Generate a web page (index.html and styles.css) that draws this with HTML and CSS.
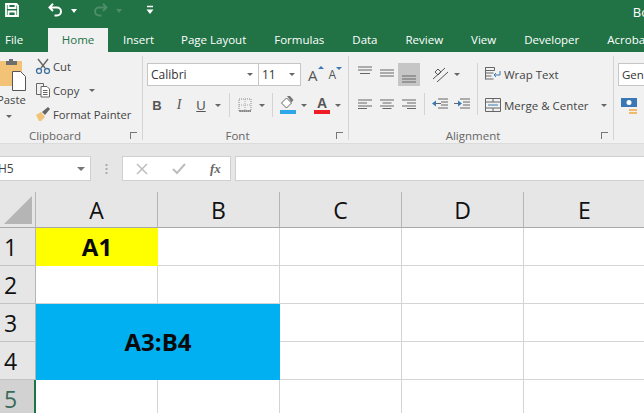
FILE: index.html
```html
<!DOCTYPE html>
<html lang="en">
<head>
  <meta charset="UTF-8">
  <title>Book1 - Excel</title>
  <link rel="stylesheet" href="styles.css">
</head>
<body>
  <!-- Title bar -->
  <div class="titlebar">
    <svg class="qat-save" width="14" height="14" viewBox="0 0 14 14"><path d="M1 1h10.500L13 2.500V13H1z M3.500 1.500V5h7V1.500 M3.500 13V8.500h7V13" fill="none" stroke="#fff" stroke-width="1.800"/></svg>
    <svg class="qat-undo" width="15" height="14" viewBox="0 0 15 14"><path d="M5 .8L1.500 4.500 5 8M2 4.500h7a4 4 0 0 1 0 8H6.500" fill="none" stroke="#fff" stroke-width="2"/></svg>
    <span class="caret-white"></span>
    <svg class="qat-redo" width="15" height="14" viewBox="0 0 15 14"><path d="M10 .8l3.500 3.700L10 8M13 4.500H6a4 4 0 0 0 0 8h2.500" fill="none" stroke="#4d8c68" stroke-width="2"/></svg>
    <span class="caret-dim"></span>
    <svg class="qat-more" width="8" height="10" viewBox="0 0 8 10"><path d="M1 1.500h6" stroke="#fff" stroke-width="1.500"/><path d="M0.500 4.500h7L4 9z" fill="#fff"/></svg>
    <span class="doc-title">Bo</span>
  </div>

  <!-- Tabs -->
  <div class="tabs">
    <span class="tab-file">File</span>
    <span class="tab-home">Home</span>
    <span class="tab-insert">Insert</span>
    <span class="tab">Page Layout</span>
    <span class="tab">Formulas</span>
    <span class="tab">Data</span>
    <span class="tab">Review</span>
    <span class="tab">View</span>
    <span class="tab">Developer</span>
    <span class="tab">Acrobat</span>
  </div>

  <!-- Ribbon -->
  <div class="ribbon">
    <div class="group group-clipboard">
      <div class="clip-body">
        <div class="paste">
          <svg class="paste-icon" width="26" height="34" viewBox="0 0 26 34"><path d="M0 3h22v25H0z" fill="#f2c377"/><path d="M6 3h3V1h4v2h4v4H6z" fill="#6e6e6e"/><path d="M12.500 13.500h8l5 5v14h-13z" fill="#fff" stroke="#555"/></svg>
          <span class="paste-label">Paste</span>
          <span class="caret"></span>
        </div>
        <div class="clip-actions">
          <div class="clip-row">
            <svg width="16" height="16" viewBox="0 0 16 16"><path d="M3 1l7 9M13 1L6 10" stroke="#666" stroke-width="1.400"/><circle cx="4" cy="13" r="2.500" fill="none" stroke="#3f6f9f" stroke-width="1.300"/><circle cx="12" cy="13" r="2.500" fill="none" stroke="#3f6f9f" stroke-width="1.300"/></svg>
            <span>Cut</span>
          </div>
          <div class="clip-row">
            <svg width="16" height="16" viewBox="0 0 16 16"><path d="M1.500 1.500h7v11h-7z" fill="#f1f1f1" stroke="#666"/><path d="M6 4.500h6l2.500 2.500v8H6z" fill="#fff" stroke="#666"/><path d="M8 8.500h4.500M8 10.500h4.500M8 12.500h4.500" stroke="#666"/></svg>
            <span>Copy</span>
            <span class="caret caret-copy"></span>
          </div>
          <div class="clip-row">
            <svg width="16" height="16" viewBox="0 0 16 16"><path d="M1 9l5-3 4 5-4 4H4z" fill="#f2c377"/><path d="M7 6l6-5 2 2-5 6z" fill="#666"/></svg>
            <span>Format Painter</span>
          </div>
        </div>
      </div>
      <div class="group-label">Clipboard</div>
      <span class="launcher"></span>
    </div>

    <div class="group group-font">
      <div class="font-body">
        <div class="font-row">
          <div class="combo combo-font">Calibri<span class="caret"></span></div>
          <div class="combo combo-size">11<span class="caret"></span></div>
          <span class="grow-font">A<i class="tri-up"></i></span>
          <span class="shrink-font">A<i class="tri-down"></i></span>
        </div>
        <div class="font-row font-row-two">
          <span class="fmt fmt-b">B</span>
          <span class="fmt fmt-i">I</span>
          <span class="fmt fmt-u">U</span>
          <span class="caret caret-u"></span>
          <span class="vsep vsep-one"></span>
          <svg class="borders" width="14" height="14" viewBox="0 0 14 14"><path d="M1 1h12v12H1z" fill="none" stroke="#888" stroke-dasharray="1 1"/><path d="M7 1v12M1 7h12" stroke="#aaa" stroke-dasharray="1 1"/><path d="M1 13h12" stroke="#555"/></svg>
          <span class="caret caret-borders"></span>
          <span class="vsep vsep-two"></span>
          <div class="color-btn">
            <svg width="16" height="14" viewBox="0 0 16 14"><path d="M1.500 7l5-5 5 5-5 5z" fill="#fff" stroke="#666"/><path d="M7 0h3l3.500 4-2 2.500z" fill="#777"/></svg>
            <span class="swatch swatch-blue"></span>
          </div>
          <span class="caret caret-color"></span>
          <div class="color-btn color-btn-font">
            <span class="font-a">A</span>
            <span class="swatch swatch-red"></span>
          </div>
          <span class="caret caret-color"></span>
        </div>
      </div>
      <div class="group-label">Font</div>
      <span class="launcher"></span>
    </div>

    <div class="group group-align">
      <div class="align-body">
        <div class="align-grid">
          <svg class="al al-top" viewBox="0 0 14 10"><path d="M0 1h14M0 4h14M2 7.500h10" stroke="#666"/></svg>
          <svg class="al al-mid" viewBox="0 0 14 10"><path d="M0 2h14M0 5h14M0 8h14" stroke="#666"/></svg>
          <span class="al-on"><svg class="al" viewBox="0 0 14 10"><path d="M0 3h14M0 6h14M0 9h14" stroke="#666"/></svg></span>
          <svg class="al" viewBox="0 0 14 10"><path d="M0 1h14M0 4h9M0 7h14M0 9.500h9" stroke="#666"/></svg>
          <svg class="al" viewBox="0 0 14 10"><path d="M0 1h14M2.500 4h9M0 7h14M2.500 9.500h9" stroke="#666"/></svg>
          <svg class="al" viewBox="0 0 14 10"><path d="M0 1h14M5 4h9M0 7h14M5 9.500h9" stroke="#666"/></svg>
        </div>
        <div class="orient-col">
          <div class="orient">
            <svg width="18" height="16" viewBox="0 0 18 16"><path d="M1 12L13 1M5 15L16 5" stroke="#555"/><path d="M3 5l3-3 3 3-3 3z" fill="none" stroke="#555"/></svg>
            <span class="caret"></span>
          </div>
          <div class="indent">
            <svg width="16" height="13" viewBox="0 0 16 13"><path d="M6 1h10M9 4h7M9 7h7M6 10h10M3 5.500h6" stroke="#666"/><path d="M0 5.500l4-3v6z" fill="#3a78b5"/></svg>
            <svg width="16" height="13" viewBox="0 0 16 13"><path d="M6 1h10M9 4h7M9 7h7M6 10h10M0 5.500h5" stroke="#666"/><path d="M8 5.500l-4-3v6z" fill="#3a78b5"/></svg>
          </div>
        </div>
        <div class="merge-col">
          <div class="merge-row">
            <svg width="16" height="16" viewBox="0 0 16 16"><path d="M.5 1.500h9v3h-9zM.5 7h8M.5 10h6M.5 13h8M.5 1.500v12" fill="none" stroke="#666"/><path d="M15 5v4H9M11 7L9 9l2 2" fill="none" stroke="#3a78b5"/></svg>
            <span>Wrap Text</span>
          </div>
          <div class="merge-row">
            <svg width="16" height="16" viewBox="0 0 16 16"><path d="M.5 1.500h15v13H.5zM.5 5h15M.5 11h15M8 1.500V5M8 11v3.500" fill="none" stroke="#666"/><path d="M3 8h10" stroke="#3a78b5"/></svg>
            <span>Merge &amp; Center</span>
            <span class="caret caret-merge"></span>
          </div>
        </div>
      </div>
      <div class="group-label">Alignment</div>
      <span class="launcher"></span>
    </div>

    <div class="group group-number">
      <div class="combo combo-number">General</div>
      <svg class="money" width="17" height="19" viewBox="0 0 17 19"><path d="M0 1h16v9H0z" fill="#3a78b5"/><circle cx="8" cy="5.500" r="2.500" fill="#fff"/><path d="M8 12h8v2H8zM8 15h8v2H8z" fill="#f0b96b"/></svg>
    </div>
  </div>

  <div class="ribbon-gap"></div>

  <!-- Formula bar -->
  <div class="formula-bar">
    <div class="name-box">H5<span class="caret"></span></div>
    <div class="fx-dots"></div>
    <div class="fx-buttons">
      <svg width="12" height="12" viewBox="0 0 12 12"><path d="M1 1l10 10M11 1L1 11" stroke="#bdbdbd" stroke-width="1.500"/></svg>
      <svg width="14" height="12" viewBox="0 0 14 12"><path d="M1 6l4 4 8-9" fill="none" stroke="#bdbdbd" stroke-width="2"/></svg>
      <span class="fx">fx</span>
    </div>
    <div class="fx-input"></div>
  </div>

  <!-- Sheet -->
  <div class="sheet">
    <div class="corner"><i></i></div>
    <div class="col-head">A</div>
    <div class="col-head">B</div>
    <div class="col-head">C</div>
    <div class="col-head">D</div>
    <div class="col-head">E</div>

    <div class="row-head">1</div>
    <div class="cell cell-yellow">A1</div>
    <div class="cell"></div><div class="cell"></div><div class="cell"></div><div class="cell"></div>

    <div class="row-head">2</div>
    <div class="cell"></div><div class="cell"></div><div class="cell"></div><div class="cell"></div><div class="cell"></div>

    <div class="row-head">3</div>
    <div class="cell cell-blue">A3:B4</div>
    <div class="cell"></div><div class="cell"></div><div class="cell"></div>

    <div class="row-head">4</div>
    <div class="cell"></div><div class="cell"></div><div class="cell"></div>

    <div class="row-head row-active">5</div>
    <div class="cell"></div><div class="cell"></div><div class="cell"></div><div class="cell"></div><div class="cell"></div>
  </div>
</body>
</html>
```

FILE: styles.css
```css
* {
  box-sizing: border-box;
}

html, body {
  margin: 0;
  height: 100%;
  overflow: hidden;
}

body {
  width: 644px;
  height: 413px;
  font-family: "Open Sans", "Liberation Sans", sans-serif;
  font-size: 12px;
  color: #444;
  background: #e6e6e6;
}

/* Title bar */
.titlebar {
  height: 28px;
  background: #217346;
  display: flex;
  align-items: flex-start;
  padding: 3px 0 0 5px;
}

.qat-undo { margin-left: 29px; }
.qat-redo { margin-left: 16px; }
.qat-more { margin-left: 24px; margin-top: 2px; }

.caret-white, .caret-dim {
  width: 0;
  height: 0;
  margin: 6px 0 0 8px;
  border: 3px solid transparent;
  border-top: 4px solid #fff;
  border-bottom: 0;
}
.caret-dim { border-top-color: #4d8c68; }

.doc-title {
  margin-left: auto;
  margin-right: -5px;
  color: #fff;
  font-size: 13px;
}

/* Tabs */
.tabs {
  height: 24px;
  background: #217346;
  display: flex;
  color: #fff;
  font-size: 11.5px;
  line-height: 24px;
  white-space: nowrap;
  overflow: hidden;
}

.tabs span { flex: none; }
.tab-file { margin-left: 5px; width: 43px; }
.tab-home { width: 60px; background: #f1f1f1; color: #217346; text-align: center; }
.tab-insert { margin: 0 -1px 0 15px; }
.tab { margin-left: 28px; }

/* Ribbon */
.ribbon {
  height: 92px;
  background: #f1f1f1;
  display: flex;
  padding-top: 4px;
  border-bottom: 1px solid #dcdcdc;
}

.group {
  position: relative;
  flex: none;
  border-right: 1px solid #d4d4d4;
  height: 84px;
}

.group-clipboard { width: 143px; }
.group-font { width: 206px; }
.group-align { width: 265px; }
.group-number { flex: 1; border-right: 0; padding: 7px 0 0 4px; }

.group-label {
  position: absolute;
  left: 0;
  right: 16px;
  bottom: -3px;
  text-align: center;
  font-size: 11.500px;
  line-height: 14px;
  color: #666;
}

.group-clipboard .group-label { right: 32px; }

.launcher {
  position: absolute;
  right: 5px;
  bottom: 1px;
  width: 7px;
  height: 7px;
  border-left: 1px solid #777;
  border-top: 1px solid #777;
}

.caret {
  display: inline-block;
  flex: none;
  width: 0;
  height: 0;
  border: 3px solid transparent;
  border-top: 3px solid #666;
  border-bottom: 0;
}

/* Clipboard */
.clip-body { display: flex; }

.paste {
  width: 31px;
  margin-left: -3px;
  display: flex;
  flex: none;
  flex-direction: column;
  align-items: flex-start;
  padding-top: 2px;
}

.paste-icon { margin-left: 3px; flex: none; }

.paste-label {
  font-size: 11.250px;
  line-height: 16px;
}

.paste .caret { margin: 7px 0 0 9px; }

.clip-actions {
  margin-left: 7px;
  padding-top: 1px;
  display: flex;
  flex-direction: column;
  gap: 6px;
}

.clip-row {
  display: flex;
  align-items: center;
  gap: 2px;
  height: 18px;
  font-size: 11.250px;
  white-space: nowrap;
}

.caret-copy { margin-left: 8px; }

/* Font */
.font-body { padding: 7px 0 0 4px; }

.font-row {
  display: flex;
  align-items: center;
}

.combo {
  height: 23px;
  background: #fff;
  border: 1px solid #c6c6c6;
  display: flex;
  flex: none;
  align-items: center;
  justify-content: space-between;
  padding: 0 5px 0 3px;
  font-size: 12px;
  color: #333;
}

.combo-font { width: 112px; }
.combo-size { width: 43px; margin-left: -1px; }

.grow-font, .shrink-font {
  position: relative;
  flex: none;
  color: #555;
}
.grow-font { margin-left: 7px; font-size: 15px; }
.shrink-font { margin-left: 11px; font-size: 12px; }

.tri-up, .tri-down {
  position: absolute;
  top: 1px;
  right: -6px;
  width: 0;
  height: 0;
  border: 3px solid transparent;
}
.tri-up { border-bottom: 3px solid #3a78b5; border-top: 0; }
.tri-down { border-top: 3px solid #3a78b5; border-bottom: 0; }

.font-row-two {
  margin-top: 7px;
  height: 24px;
}

.fmt {
  flex: none;
  width: 22px;
  text-align: center;
  font-size: 13px;
  color: #555;
  font-family: "Liberation Sans", sans-serif;
}
.fmt-b { font-weight: bold; margin-left: -1px; }
.fmt-i { font-style: italic; font-family: "Liberation Serif", serif; font-size: 14px; }
.fmt-u { text-decoration: underline; }

.vsep {
  flex: none;
  width: 1px;
  height: 24px;
  background: #d4d4d4;
}
.vsep-one { margin: 0 8px; }
.vsep-two { margin: 0 7px; }

.borders { flex: none; }

.caret-u { margin-left: 3px; }
.caret-borders { margin-left: 7px; }
.caret-color { margin-left: 5px; }

.color-btn {
  display: flex;
  flex: none;
  flex-direction: column;
  align-items: center;
  width: 16px;
  height: 18px;
  justify-content: flex-end;
}

.color-btn-font { margin-left: 7px; }

.font-a {
  font-size: 14px;
  line-height: 14px;
  color: #555;
  font-weight: bold;
  font-family: "Liberation Sans", sans-serif;
}

.swatch { display: block; width: 16px; height: 4px; flex: none; }
.swatch-blue { background: #2ea7e8; }
.swatch-red { background: #ee1c25; }

/* Alignment */
.align-body {
  display: flex;
  padding: 7px 0 0 5px;
}

.al { width: 14px; height: 10px; display: block; flex: none; }

.align-grid {
  display: grid;
  grid-template-columns: repeat(3, 22px);
  grid-template-rows: 23px 36px;
  justify-items: center;
  align-items: center;
  flex: none;
  width: 66px;
}

.al-top { align-self: start; margin-top: 3px; }
.al-mid { align-self: start; margin-top: 5px; }

.al-on {
  width: 22px;
  height: 23px;
  background: #c6c6c6;
  display: flex;
  align-items: flex-end;
  justify-content: center;
  padding-bottom: 3px;
}

.orient-col {
  width: 57px;
  flex: none;
  padding-left: 12px;
}

.orient {
  display: flex;
  align-items: center;
  gap: 4px;
  height: 23px;
}

.indent {
  display: flex;
  align-items: center;
  gap: 6px;
  height: 22px;
  margin: 7px 0 0 -8px;
  padding-left: 7px;
  border-left: 1px solid #d4d4d4;
}

.merge-col {
  flex: none;
  border-left: 1px solid #d4d4d4;
  height: 52px;
  padding-left: 7px;
}

.merge-row {
  display: flex;
  align-items: center;
  gap: 3px;
  height: 22px;
  font-size: 11.500px;
  white-space: nowrap;
}

.merge-row + .merge-row { margin-top: 9px; }
.caret-merge { margin-left: 9px; }

/* Number */
.combo-number {
  width: 30px;
  justify-content: flex-start;
  overflow: hidden;
  border-right: 0;
  font-size: 11.500px;
}

.money { margin: 11px 0 0 3px; display: block; }

.ribbon-gap {
  height: 12px;
  background: #e6e6e6;
}

/* Formula bar */
.formula-bar {
  height: 36px;
  display: flex;
  align-items: flex-start;
  background: #e6e6e6;
}

.name-box {
  width: 91px;
  height: 25px;
  background: #fff;
  border: 1px solid #d0d0d0;
  border-left: 0;
  display: flex;
  align-items: center;
  justify-content: space-between;
  padding: 0 5px 0 0;
  font-size: 12px;
  color: #444;
  text-indent: -2px;
  overflow: hidden;
}

.name-box .caret {
  border-width: 4px;
  border-bottom: 0;
  border-top-color: #777;
}

.fx-dots {
  width: 31px;
  height: 11px;
  margin-top: 7px;
  background: radial-gradient(circle, #a8a8a8 1px, transparent 1.200px) center top / 3px 4px repeat-y;
}

.fx-buttons {
  width: 109px;
  height: 25px;
  background: #fff;
  border: 1px solid #d0d0d0;
  display: flex;
  align-items: center;
  padding-left: 13px;
  gap: 24px;
}

.fx {
  font-family: "Liberation Serif", serif;
  font-style: italic;
  font-weight: bold;
  font-size: 13px;
  color: #666;
}

.fx-input {
  flex: 1;
  height: 25px;
  margin-left: 4px;
  background: #fff;
  border: 1px solid #d0d0d0;
  border-right: 0;
}

/* Sheet */
.sheet {
  display: grid;
  grid-template-columns: 36px repeat(5, 122px);
  grid-template-rows: 36px repeat(5, 38px);
  background: #fff;
}

.corner {
  position: relative;
  background: #e6e6e6;
  border-right: 1px solid #b5b5b5;
  border-bottom: 1px solid #a8a8a8;
}

.corner i {
  position: absolute;
  right: 3px;
  bottom: 3px;
  width: 0;
  height: 0;
  border-left: 28px solid transparent;
  border-bottom: 28px solid #b5b5b5;
}

.col-head {
  background: #e6e6e6;
  border-right: 1px solid #b5b5b5;
  border-bottom: 1px solid #a8a8a8;
  display: flex;
  align-items: center;
  justify-content: center;
  font-size: 23px;
  color: #111;
}

.row-head {
  background: #e6e6e6;
  border-right: 1px solid #b5b5b5;
  border-bottom: 1px solid #c4c4c4;
  display: flex;
  align-items: center;
  padding-left: 4px;
  font-size: 23px;
  color: #111;
}

.row-active {
  color: #3a6a58;
  background: #d2d2d2;
  border-right: 2px solid #217346;
}

.cell {
  border-right: 1px solid #d4d4d4;
  border-bottom: 1px solid #d4d4d4;
}

.cell-yellow, .cell-blue {
  display: flex;
  align-items: center;
  justify-content: center;
  border: 0;
  padding-bottom: 2px;
  font-weight: bold;
  font-size: 24px;
  color: #0a0a0a;
}

.cell-yellow { background: #ffff00; }

.cell-blue {
  grid-column: span 2;
  grid-row: span 2;
  background: #00b0f0;
}
```
